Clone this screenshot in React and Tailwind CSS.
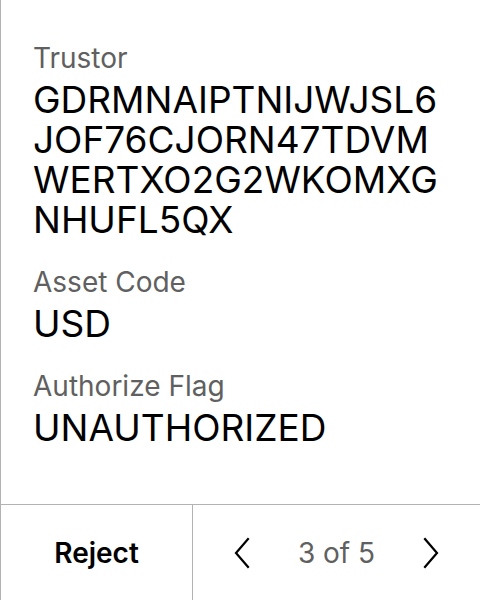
import React from "react";

function Chevron({ dir }) {
  return (
    <svg width="16" height="32" viewBox="0 0 16 32" fill="none" stroke="#000" strokeWidth="2.2" strokeLinecap="square" strokeLinejoin="miter">
      {dir === "left" ? (
        <polyline points="14,2 2,16 14,30" />
      ) : (
        <polyline points="2,2 14,16 2,30" />
      )}
    </svg>
  );
}

function Field({ label, value }) {
  return (
    <div className="flex flex-col gap-[6px] mb-[26px]">
      <div className="text-[28px] leading-8 text-[#606060]">{label}</div>
      <div className="text-[37px] leading-[40px] text-black break-all">{value}</div>
    </div>
  );
}

export default function App() {
  return (
    <div
      className="w-[480px] h-[600px] bg-white border-l border-[#b3b3b3] flex flex-col"
      style={{ fontFamily: "Inter, 'Liberation Sans', sans-serif" }}
    >
      <div className="flex-1 px-8 pt-[42px]">
        <Field label="Trustor" value="GDRMNAIPTNIJWJSL6JOF76CJORN47TDVMWERTXO2G2WKOMXGNHUFL5QX" />
        <Field label="Asset Code" value="USD" />
        <Field label="Authorize Flag" value="UNAUTHORIZED" />
      </div>
      <div className="h-24 border-t border-[#b3b3b3] flex">
        <div className="w-[192px] border-r border-[#b3b3b3] flex items-center justify-center">
          <span className="text-[28px] font-semibold text-black">Reject</span>
        </div>
        <div className="flex-1 flex items-center justify-center gap-12">
          <Chevron dir="left" />
          <span className="text-[28px] text-[#606060]">3 of 5</span>
          <Chevron dir="right" />
        </div>
      </div>
    </div>
  );
}
